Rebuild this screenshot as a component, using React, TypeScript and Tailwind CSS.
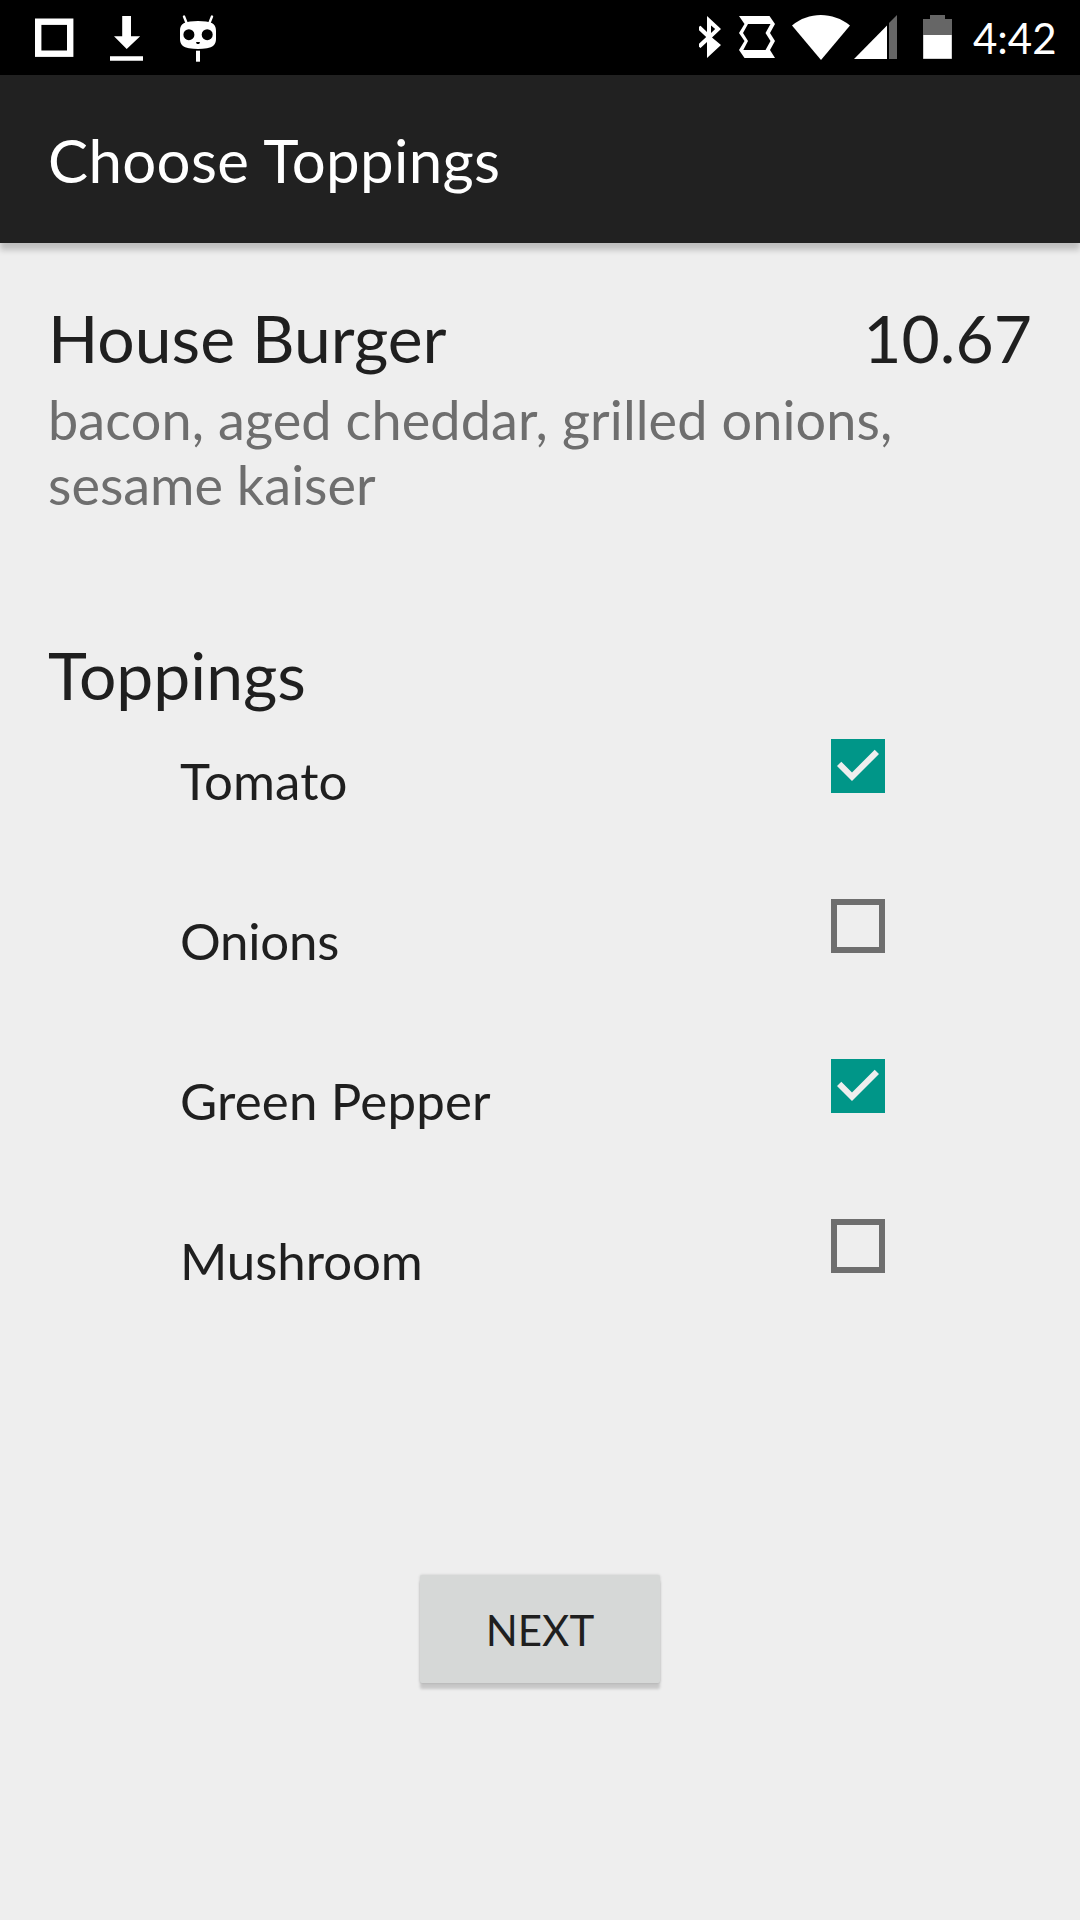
import { useState } from "react";

function StatusBar() {
  return (
    <div className="flex h-[75px] bg-black pl-[35px] text-white">
      <svg className="h-[75px] w-[39px]" viewBox="35 0 39 75" fill="none">
        <rect x="38.2" y="21.7" width="32" height="32" stroke="#fff" strokeWidth="6.4" />
      </svg>
      <svg className="ml-9 h-[75px] w-[33px]" viewBox="110 0 33 75" fill="#fff">
        <path d="M122.2 16h8.8v20.3h9.2L126.7 49 114 36.3h8.2zM110 56.2h33v4.6h-33z" />
      </svg>
      <svg className="ml-[37px] h-[75px] w-9" viewBox="180 0 36 75">
        <path d="M184 16.5l3 7.5M212 16.5l-3 7.5" stroke="#fff" strokeWidth="2.4" strokeLinecap="round" />
        <path
          d="M190 21.6c5-.8 11-.8 16 0 7 .9 10 3.600 10 9.400v8c0 6-3.500 8.300-9 9.200-6 1-12 1-18 0-5.500-.9-9-3.200-9-9.200v-8c0-5.800 3-8.500 10-9.400z"
          fill="#fff"
        />
        <circle cx="188.900" cy="34.700" r="5.500" />
        <circle cx="207.200" cy="34.700" r="5.500" />
        <path d="M196 42h4l-.8 2h-2.400z" />
        <path d="M196 50.700h4v11h-4z" fill="#fff" />
      </svg>
      <svg className="ml-[483px] h-[75px] w-[22px]" viewBox="699 0 22 75">
        <path
          d="M707 16l14 13-9 8.500 9 7.500-14 13V42l-6.500 6-1.800-1.500V44l7.500-7-7.500-7v-3l1.800-1.200 6.500 6.200z"
          fill="#fff"
        />
        <path d="M711 25.500l4.200 3.500-4.200 4z" />
      </svg>
      <svg className="ml-[18px] h-[75px] w-9" viewBox="739 0 36 75" fill="#fff">
        <path
          fillRule="evenodd"
          d="M739 16h30.500l5.500 8-5 9 5 8-5 9 5 8h-30.500l-5.500-8 5.500-9-5.500-8 5.500-9zM748 24l-5 9 5 8-4.700 9h22.200l5-9-5-8 5-9z"
        />
      </svg>
      <svg className="ml-[17px] h-[75px] w-[58px]" viewBox="792 0 58 75" fill="#fff">
        <path d="M792 25.500C808.500 11.500 833 11.500 850 25.500L821 60z" />
      </svg>
      <svg className="ml-1 h-[75px] w-[43px]" viewBox="854 0 43 75">
        <path d="M854 59h33V25.500z" fill="#fff" />
        <path d="M889 59h8V15l-8 8z" fill="#666" />
      </svg>
      <svg className="ml-[26px] h-[75px] w-[29px]" viewBox="923 0 29 75">
        <path d="M923 59V19h7v-4h15v4h7v40z" fill="#666" />
        <path d="M923.300 35h28.400v23.700h-28.400z" fill="#fff" />
      </svg>
      <span className="ml-[21px] mt-[13px] text-[42px] leading-[50px]">4:42</span>
    </div>
  );
}

function Checkbox({ label, checked, onToggle }: { label: string; checked: boolean; onToggle: () => void }) {
  return (
    <button
      role="checkbox"
      aria-checked={checked}
      aria-label={label}
      onClick={onToggle}
      className={checked ? "size-[54px] bg-[#009688]" : "size-[54px] border-[6px] border-[#6e6e6e]"}
    >
      {checked && (
        <svg viewBox="0 0 54 54" className="size-[54px]" fill="#eee">
          <path d="M6 27l4.300-4.300L21 33.500l22.700-22.800L48 15 21 42z" />
        </svg>
      )}
    </button>
  );
}

const initialToppings = [
  { name: "Tomato", checked: true, tracking: "tracking-[0.1px]" },
  { name: "Onions", checked: false, tracking: "tracking-[-0.25px]" },
  { name: "Green Pepper", checked: true, tracking: "tracking-[0.18px]" },
  { name: "Mushroom", checked: false, tracking: "tracking-[-0.05px]" },
];

export default function App() {
  const [toppings, setToppings] = useState(initialToppings);
  const toggle = (name: string) =>
    setToppings((list) => list.map((t) => (t.name === name ? { ...t, checked: !t.checked } : t)));

  return (
    <div className="flex h-[1920px] w-[1080px] flex-col overflow-hidden bg-[#eee] font-['Lato',sans-serif] text-[#1f1f1f]">
      <StatusBar />
      <header className="flex h-[168px] items-center bg-[#212121] px-12 pt-px text-[60px] leading-[72px] tracking-[0.34px] text-white shadow-[0_7px_6px_rgba(0,0,0,0.2)]">
        <h1>Choose Toppings</h1>
      </header>
      <main className="flex flex-col px-12 pt-[55px]">
        <div className="flex justify-between text-[66px] leading-[79px]">
          <h2>House Burger</h2>
          <span>10.67</span>
        </div>
        <p className="mt-[10px] text-[54px] leading-[65px] text-[#6e6e6e]">
          <span className="tracking-[0.11px]">bacon, aged cheddar, grilled onions,</span>
          <br />
          sesame kaiser
        </p>
        <h2 className="mt-[118px] text-[66px] leading-[79px]">Toppings</h2>
        <ul className="mt-[25px] pl-[132px] pr-[147px]">
          {toppings.map((t) => (
            <li key={t.name} className="flex h-40 items-start justify-between">
              <span className={`mt-[11px] text-[51px] leading-[61px] ${t.tracking}`}>{t.name}</span>
              <Checkbox label={t.name} checked={t.checked} onToggle={() => toggle(t.name)} />
            </li>
          ))}
        </ul>
        <button className="mt-[196px] h-[108px] w-[240px] self-center rounded-[2px] bg-[#d6d8d7] pt-px text-[42px] leading-[50px] shadow-[0_6px_3px_rgba(0,0,0,0.16),0_0_3px_rgba(0,0,0,0.16)]">
          NEXT
        </button>
      </main>
    </div>
  );
}
